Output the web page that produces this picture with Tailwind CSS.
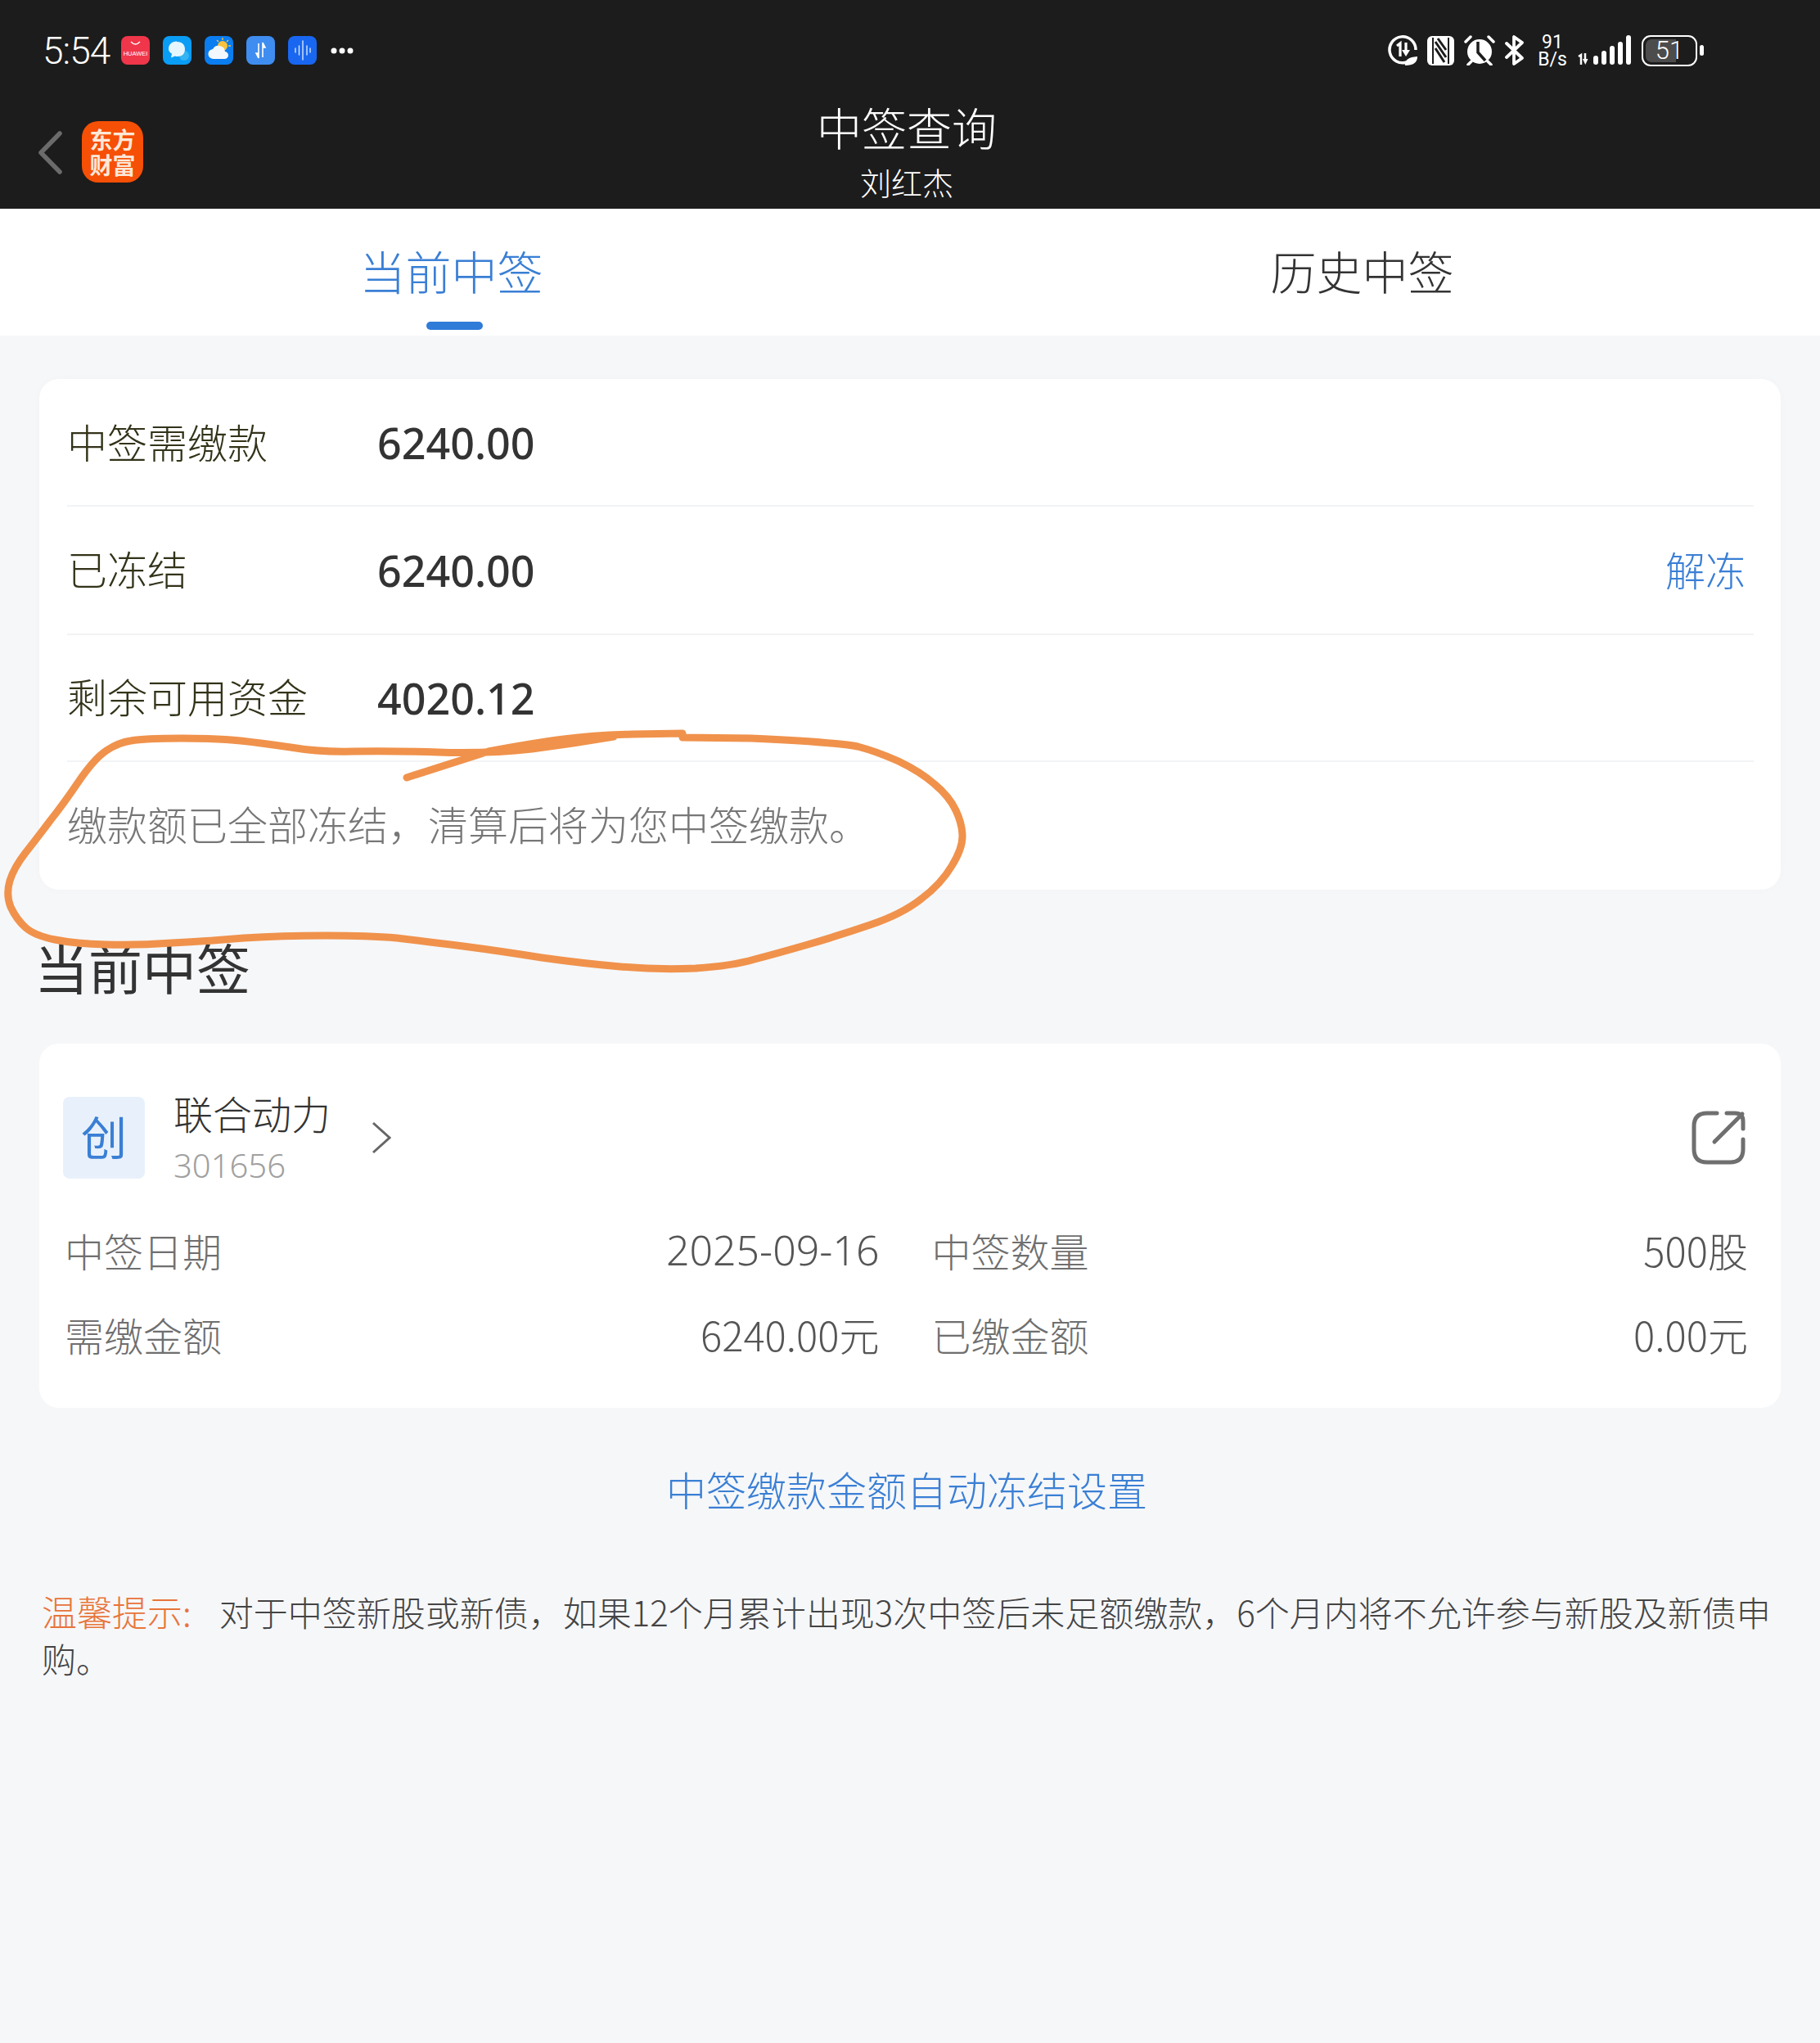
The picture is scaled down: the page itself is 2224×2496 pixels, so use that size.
<!DOCTYPE html>
<html lang="zh"><head><meta charset="utf-8"><script src="https://cdn.jsdelivr.net/npm/@tailwindcss/browser@4"></script><title>中签查询</title></head>
<body class="m-0">
<div class="relative w-[2224px] h-[2496px] bg-[#f6f7f9] overflow-hidden font-['Noto_Sans_CJK_SC','Noto_Sans',sans-serif] font-light text-[49px] text-[#333]">

<header class="h-[255px] bg-[#1c1c1c] text-white flex flex-col">
  <div class="h-[123px] flex items-center pl-[52px] pr-[142px]">
    <span class="w-[96px] text-[46px] leading-none font-['Roboto',sans-serif] font-light tracking-[-1px]">5:54</span>
    <div class="flex gap-[16px]">
      <svg class="w-[35px] h-[35px]" viewBox="0 0 35 35"><rect width="35" height="35" rx="8" fill="#f0364a"/><path d="M12 7q5.500 6 11 0" fill="none" stroke="#fff" stroke-width="1.300"/><text x="17.500" y="24" font-size="7.500" text-anchor="middle" fill="#fff" font-family="Liberation Sans">HUAWEI</text></svg>
      <svg class="w-[35px] h-[35px]" viewBox="0 0 35 35"><rect width="35" height="35" rx="8" fill="#0a9df5"/><circle cx="26" cy="24" r="6" fill="#34b4f2"/><path d="M17 7c7 0 10 4 10 9s-3 9-9 9q-2 0-3-.500l-5 2 1-5q-4-2-4-6c0-5 4-9 10-9z" fill="#e6f6fe"/></svg>
      <svg class="w-[35px] h-[35px]" viewBox="0 0 35 35"><rect width="35" height="35" rx="8" fill="#0a7df0"/><circle cx="22" cy="12" r="6" fill="#f9c23c"/><path d="M22 2v3M29 5l-2 2M32 12h-3M15 5l2 2" stroke="#f9c23c" stroke-width="1.400"/><path d="M11 28a6 6 0 0 1-1-12 8 8 0 0 1 15 3 4.500 4.500 0 0 1-1 9z" fill="#f2f8fe"/></svg>
      <svg class="w-[35px] h-[35px]" viewBox="0 0 35 35"><rect width="35" height="35" rx="8" fill="#3f8df0"/><path d="M15 9v17M15 27l-3-6h3zM20 26V9M20 8l3 6h-3z" fill="#fff" stroke="#fff" stroke-width="1.600"/></svg>
      <svg class="w-[35px] h-[35px]" viewBox="0 0 35 35"><rect width="35" height="35" rx="8" fill="#1967f0"/><path d="M9 15v5M13.500 12v11M18 6v23M23 12v11M27 15v5" stroke="#e6f0ff" stroke-width="1.300" stroke-linecap="round"/></svg>
    </div>
    <svg class="ml-[17px] w-[28px] h-[8px]" viewBox="0 0 28 8"><circle cx="4" cy="4" r="3.500" fill="#fff"/><circle cx="14" cy="4" r="3.500" fill="#fff"/><circle cx="24" cy="4" r="3.500" fill="#fff"/></svg>
    <div class="ml-auto flex items-center h-[40px]">
      <svg class="w-[37px] h-[37px]" viewBox="0 0 37 37"><path d="M24 33A16 16 0 1 1 35 18" fill="none" stroke="#fff" stroke-width="3.500"/><path d="M12 13l4-3v16" fill="none" stroke="#fff" stroke-width="3.200"/><path d="M23 9v10" stroke="#fff" stroke-width="3.200"/><path d="M18 18h10l-5 8z" fill="#fff"/><path d="M22 37q-1-10 15-11 0 11-15 11z" fill="#fff"/></svg>
      <svg class="ml-[12px] w-[33px] h-[36px]" viewBox="0 0 33 36"><rect x="0" y="0" width="33" height="36" rx="6" fill="#fff"/><path d="M7 2v32M26 2v32" stroke="#1c1c1c" stroke-width="2"/><path d="M10 7l13 19M10 15l11 17M13 3l10 14" stroke="#1c1c1c" stroke-width="3"/></svg>
      <svg class="ml-[12px] w-[38px] h-[37px]" viewBox="0 0 38 37"><circle cx="19" cy="20" r="15" fill="#fff"/><path d="M2 8l6-6M36 8l-6-6M5 36l4-4M33 36l-4-4" stroke="#fff" stroke-width="3.500" stroke-linecap="round"/><path d="M17 8v13l9 10" fill="none" stroke="#1c1c1c" stroke-width="3.500"/></svg>
      <svg class="ml-[12px] w-[24px] h-[37px]" viewBox="0 0 24 37"><path d="M2 27L21 9 11 2v33l10-7L2 10" fill="none" stroke="#fff" stroke-width="3.800" stroke-linejoin="round" stroke-linecap="round"/></svg>
      <div class="ml-[17px] w-[34px] flex flex-col items-center text-[23px] leading-[21px] font-['Roboto',sans-serif] font-normal"><span>91</span><span>B/s</span></div>
      <svg class="ml-[14px] w-[65px] h-[37px]" viewBox="0 0 65 37"><path d="M1 26l3-2v12" fill="none" stroke="#fff" stroke-width="2.500"/><path d="M9 22v8" stroke="#fff" stroke-width="2.500"/><path d="M6 29h6.500l-3.250 7z" fill="#fff"/><g fill="#fff"><rect x="19" y="25" width="6" height="11" rx="3"/><rect x="29" y="19" width="6" height="17" rx="3"/><rect x="39" y="13" width="6" height="23" rx="3"/><rect x="49" y="8" width="6" height="28" rx="3"/><rect x="59" y="0" width="6" height="36" rx="3"/></g></svg>
      <div class="relative ml-[13px] w-[68px] h-[38px] rounded-[11px] border-2 border-white p-[3px]">
        <div class="h-full w-[37px] rounded-l-[7px] bg-[#4c4c4c]"></div>
        <span class="absolute inset-0 flex items-center justify-center text-[31px] leading-none font-['Roboto',sans-serif] font-light">51</span>
      </div>
      <div class="ml-[3px] w-[5px] h-[13px] rounded-full bg-white"></div>
    </div>
  </div>
  <div class="relative flex-1 flex flex-col items-center pr-[8px]">
    <svg class="absolute left-[46px] top-[37px] w-[30px] h-[53px]" viewBox="0 0 30 53"><path d="M27 3L4 26.500 27 50" fill="none" stroke="#6b6b6b" stroke-width="5.500" stroke-linecap="round" stroke-linejoin="round"/></svg>
    <div class="absolute left-[100px] top-[25px] w-[75px] h-[75px] rounded-[20px] bg-[#f64f06] flex flex-col items-center justify-center text-[28px] leading-[31px] font-bold text-[#fde8d8]"><span>东方</span><span>财富</span></div>
    <div class="-mt-[4px] text-[55px] leading-[70px]">中签查询</div>
    <div class="mt-[10px] text-[38px] leading-[45px]">刘红杰</div>
  </div>
</header>

<nav class="relative h-[155px] bg-white flex text-[56px]">
  <div class="relative w-1/2 flex justify-center pt-[35px] pr-[9px] text-[#3a7fd5]"><span class="leading-[80px]">当前中签</span><div class="absolute left-[521px] top-[138px] w-[69px] h-[10px] rounded-full bg-[#2f7bd8]"></div></div>
  <div class="w-1/2 flex justify-center pt-[35px] pr-[7px]"><span class="leading-[80px]">历史中签</span></div>
</nav>

<main class="px-[48px] pt-[53px]">
  <section class="h-[624px] rounded-[24px] bg-white pl-[34px] pr-[33px] shadow-[0_0_12px_rgba(0,0,0,0.02)]">
    <div class="h-[156px] flex items-center border-b-2 border-[#f2f3f5]"><span class="w-[379px] -mt-[3px] text-[#33331a]">中签需缴款</span><span class="mt-[2px] font-['Noto_Sans',sans-serif] font-medium text-[52px] text-[#333]">6240.00</span></div>
    <div class="h-[157px] flex items-center border-b-2 border-[#f2f3f5]"><span class="w-[379px] -mt-[5px] text-[#33331a]">已冻结</span><span class="mt-[1px] font-['Noto_Sans',sans-serif] font-medium text-[52px] text-[#333]">6240.00</span><span class="ml-auto mr-[10px] -mt-[3px] text-[#3a7fd5]">解冻</span></div>
    <div class="h-[155px] flex items-center border-b-2 border-[#f2f3f5]"><span class="w-[379px] -mt-[5px] text-[#33331a]">剩余可用资金</span><span class="mt-[1px] font-['Noto_Sans',sans-serif] font-medium text-[52px] text-[#333]">4020.12</span></div>
    <div class="h-[156px] flex items-center -mt-[3px] text-[#777]">缴款额已全部冻结，清算后将为您中签缴款。</div>
  </section>

  <h2 class="mt-[58px] -ml-[6px] h-[70px] leading-[70px] text-[66px] font-normal text-[#333]">当前中签</h2>

  <section class="mt-[60px] h-[445px] rounded-[24px] bg-white pt-[65px] pl-[29px] pr-[40px]">
    <div class="flex items-center h-[100px]">
      <div class="w-[100px] h-[100px] rounded-[8px] bg-[#e8f1fb] flex items-center justify-center text-[56px] leading-[56px] pb-[6px] font-normal text-[#3a7fd5]">创</div>
      <div class="ml-[35px] flex flex-col"><span class="text-[48px] leading-[62px] -mt-[6px]">联合动力</span><span class="mt-[11px] text-[40px] leading-[46px] text-[#a0a0a0] font-['Noto_Sans',sans-serif]">301656</span></div>
      <svg class="ml-[50px] w-[24px] h-[40px]" viewBox="0 0 24 40"><path d="M2 2l20 18L2 38" fill="none" stroke="#666" stroke-width="3"/></svg>
      <svg class="ml-auto mr-[3px] w-[66px] h-[66px]" viewBox="0 0 66 66"><path d="M31 3H19Q3 3 3 19V47Q3 63 19 63H47Q63 63 63 47V35M43 3H53Q63 3 63 13V22M28 38L62 4" fill="none" stroke="#6f6f6f" stroke-width="5" stroke-linecap="round"/></svg>
    </div>
    <div class="mt-[55px] grid grid-cols-2 gap-x-[64px] gap-y-[39px] text-[48px] text-[#6f6f6f] leading-[64px]">
      <div class="flex justify-between"><span class="ml-[2px]">中签日期</span><span class="text-[#555] text-[50px] font-['Noto_Sans',sans-serif]">2025-09-16</span></div>
      <div class="flex justify-between"><span>中签数量</span><span class="text-[#555] text-[49px]">500股</span></div>
      <div class="flex justify-between"><span class="ml-[2px]">需缴金额</span><span class="text-[#555] text-[49px]">6240.00元</span></div>
      <div class="flex justify-between"><span>已缴金额</span><span class="text-[#555] text-[49px]">0.00元</span></div>
    </div>
  </section>

  <div class="mt-[64px] pr-[8px] text-center leading-[70px] text-[#3a7fd5]">中签缴款金额自动冻结设置</div>

  <p class="mt-[86px] pl-[3px] text-[42px] leading-[57px] text-[#444]"><span class="text-[43px] text-[#e8743b] mr-[34px]">温馨提示:</span>对于中签新股或新债，如果12个月累计出现3次中签后未足额缴款，6个月内将不允许参与新股及新债申购。</p>
</main>

<svg class="absolute left-0 top-0 pointer-events-none" width="2224" height="2496" viewBox="0 0 2224 2496"><path d="M497 950L597 918Q650 908 689 903T773 897L834 896V901L918 902Q1025 907 1048 912Q1071 918 1098 930Q1125 943 1142 958Q1160 973 1168 990Q1176 1007 1176 1022Q1176 1037 1163 1058Q1150 1080 1126 1098Q1102 1117 1063 1130Q1025 1143 987 1154Q949 1165 922 1172Q895 1180 850 1183Q804 1185 758 1181Q712 1177 662 1170Q612 1162 566 1156Q520 1150 485 1146Q451 1143 398 1143Q344 1143 298 1146Q253 1150 210 1152Q168 1155 130 1154Q92 1153 67 1148Q42 1143 31 1133Q20 1123 13 1108Q7 1093 12 1076Q17 1060 31 1042Q46 1023 61 1003Q77 983 96 955Q115 927 130 917Q145 907 160 905Q176 902 222 902Q268 902 294 905Q321 908 355 913Q390 919 432 918Q474 917 535 919Q597 921 650 915L700 908 750 900" fill="none" stroke="#f0924c" stroke-width="9" stroke-linecap="round" stroke-linejoin="round"/></svg>
</div>
</body></html>
